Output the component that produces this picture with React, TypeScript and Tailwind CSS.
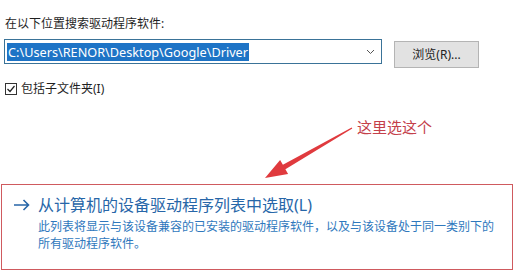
const FONT = { fontFamily: '"Noto Sans", "Noto Sans CJK SC", sans-serif' };

const App = () => {
  return (
    <div className="relative w-[521px] h-[279px] overflow-hidden bg-white text-[#1f1f1f]" style={FONT}>
      <div className="pt-[16px] pl-[5px] text-[12px] leading-[16px]">在以下位置搜索驱动程序软件:</div>

      <div className="mt-[7px] flex items-start pl-[4px]">
        <div className="flex h-[25px] w-[378px] items-center border border-[#3a7398] pl-[2px] pr-[6px]">
          <span className="bg-[#1e74c6] px-[1px] text-[12.7px] leading-[18px] text-white">
            C:\Users\RENOR\Desktop\Google\Driver
          </span>
          <svg className="ml-auto" width="9" height="6" viewBox="0 0 9 6">
            <path d="M1 1 L4.5 4.5 L8 1" fill="none" stroke="#555" strokeWidth="1" />
          </svg>
        </div>
        <button className="ml-[12px] mt-[2px] h-[27px] w-[85px] border border-[#b4b4b4] bg-[#e2e2e2] text-[12px] text-[#222]">
          浏览(R)...
        </button>
      </div>

      <div className="mt-[14px] flex items-center gap-[4px] pl-[5px] text-[12px] leading-[14px]">
        <span className="flex h-[12px] w-[12px] items-center justify-center border border-[#333]">
          <svg width="10" height="10" viewBox="0 0 10 10">
            <path d="M1.5 5 L4 7.5 L8.5 2" fill="none" stroke="#222" strokeWidth="1.2" />
          </svg>
        </span>
        <span>包括子文件夹(I)</span>
      </div>

      <div className="ml-[1px] mt-[88px] h-[86px] w-[512px] border border-[#cf5a5e] pt-[10px] pl-[11px]">
        <div className="flex items-center text-[16px] leading-[20px] text-[#2766a8]">
          <svg width="17" height="12" viewBox="0 0 17 12" className="mr-[8px]">
            <path d="M1 6 H15.5 M10.5 1 L15.5 6 L10.5 11" fill="none" stroke="#2766a8" strokeWidth="1.6" />
          </svg>
          <span>从计算机的设备驱动程序列表中选取(L)</span>
        </div>
        <div className="mt-[3px] pl-[25px] text-[12px] leading-[17px] text-[#2f78bd]">
          <div>此列表将显示与该设备兼容的已安装的驱动程序软件，以及与该设备处于同一类别下的</div>
          <div>所有驱动程序软件。</div>
        </div>
      </div>

      {/* annotation */}
      <div className="absolute left-[357px] top-[117px] text-[15px] leading-[20px] text-[#c4404a]">这里选这个</div>
      <svg className="absolute left-0 top-0" width="521" height="279" viewBox="0 0 521 279">
        <path
          d="M265 178 L280.1 160 L282.9 164.8 L351.7 127.6 L352.3 128.4 L285.4 169.2 L288.1 174 Z"
          fill="#e03a3e"
        />
      </svg>
    </div>
  );
};

export default App;
